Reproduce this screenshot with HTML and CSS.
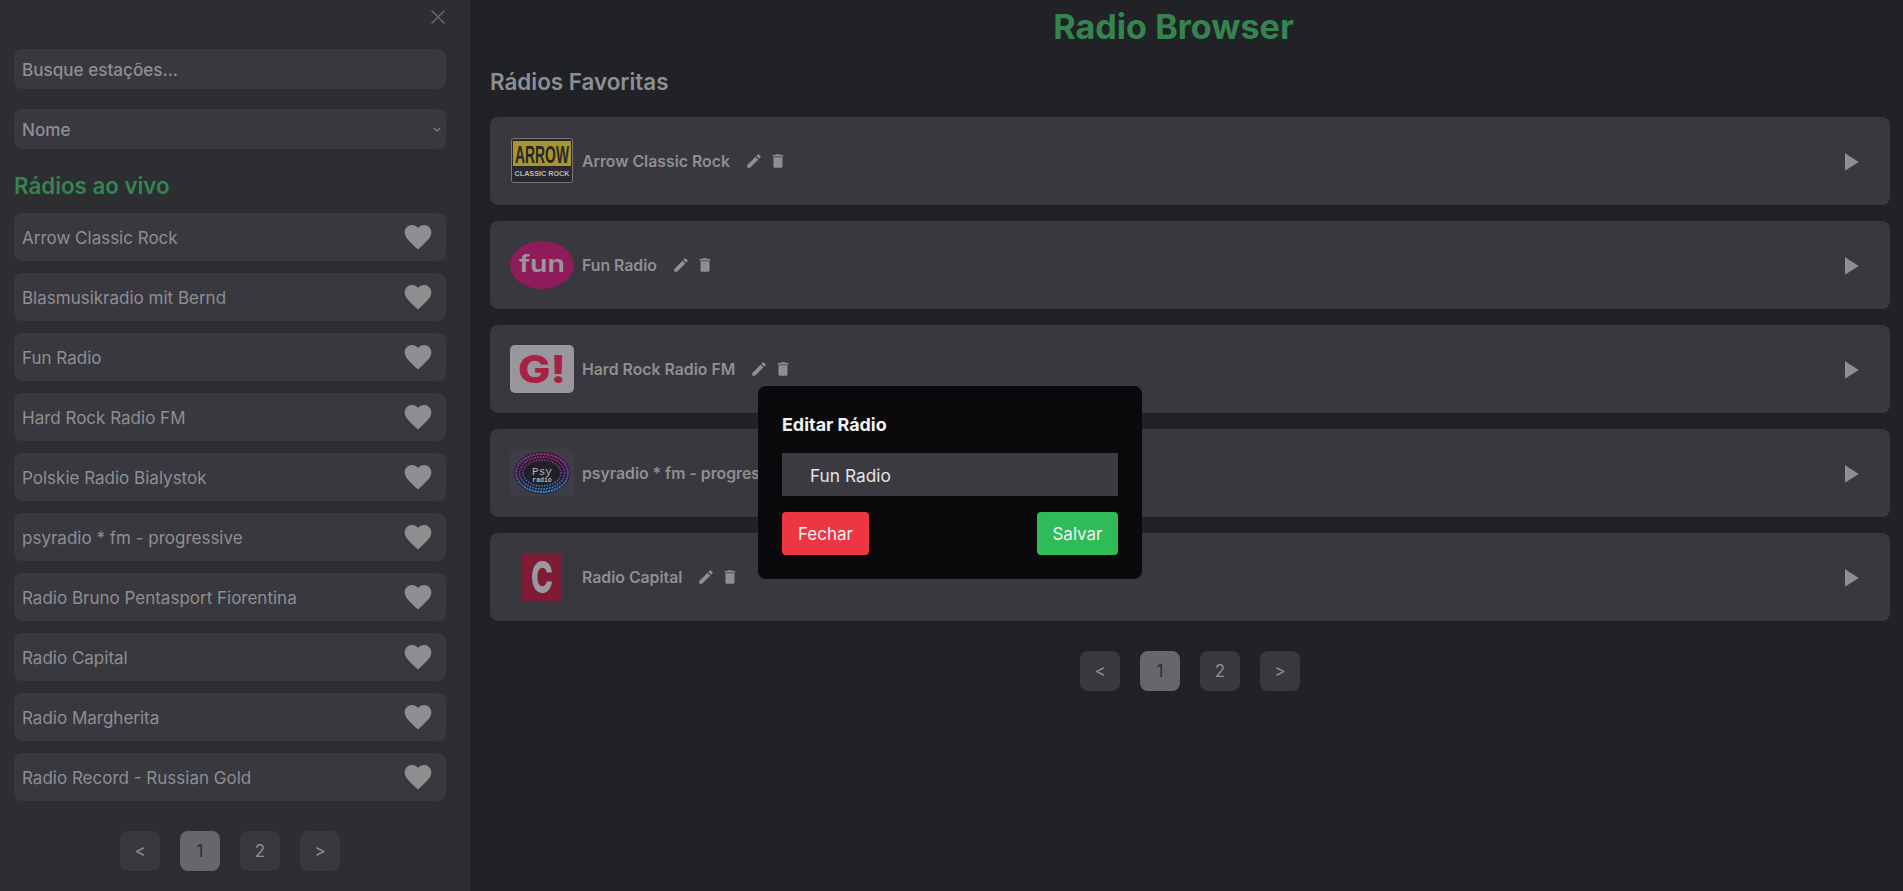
FILE: index.html
```html
<!DOCTYPE html>
<html lang="pt-BR">
<head>
<meta charset="utf-8">
<title>Radio Browser</title>
<link rel="stylesheet" href="styles.css">
</head>
<body>
<svg class="sprites" aria-hidden="true">
  <symbol id="i-heart" viewBox="0 0 24 24"><path d="M12 21.35l-1.45-1.32C5.4 15.36 2 12.28 2 8.5 2 5.42 4.42 3 7.5 3c1.74 0 3.41.81 4.5 2.09C13.09 3.81 14.76 3 16.5 3 19.58 3 22 5.42 22 8.5c0 3.78-3.4 6.86-8.55 11.54L12 21.35z"/></symbol>
  <symbol id="i-edit" viewBox="0 0 24 24"><path d="M3 17.25V21h3.75L17.81 9.94l-3.75-3.75L3 17.25zM20.71 7.04c.39-.39.39-1.02 0-1.41l-2.34-2.34a.9959.9959 0 0 0-1.41 0l-1.83 1.83 3.75 3.75 1.83-1.83z"/></symbol>
  <symbol id="i-del" viewBox="0 0 24 24"><path d="M6 19c0 1.1.9 2 2 2h8c1.1 0 2-.9 2-2V7H6v12zM19 4h-3.5l-1-1h-5l-1 1H5v2h14V4z"/></symbol>
  <symbol id="i-play" viewBox="0 0 24 24"><path d="M8 5v14l11-7z"/></symbol>
</svg>
<div class="app">
  <aside class="sidebar">
    <div class="close-row">
      <svg class="close" viewBox="0 0 16 16"><path d="M1.5 1.5l13 13M14.5 1.5l-13 13"/></svg>
    </div>
    <div class="field">Busque estações...</div>
    <div class="field select">Nome
      <svg class="chev" viewBox="0 0 10 6"><path d="M1 1l4 4 4-4"/></svg>
    </div>
    <h2 class="side-title">Rádios ao vivo</h2>
    <ul class="stations">
      <li class="station"><span>Arrow Classic Rock</span><svg class="heart"><use href="#i-heart"/></svg></li>
      <li class="station"><span>Blasmusikradio mit Bernd</span><svg class="heart"><use href="#i-heart"/></svg></li>
      <li class="station"><span>Fun Radio</span><svg class="heart"><use href="#i-heart"/></svg></li>
      <li class="station"><span>Hard Rock Radio FM</span><svg class="heart"><use href="#i-heart"/></svg></li>
      <li class="station"><span>Polskie Radio Bialystok</span><svg class="heart"><use href="#i-heart"/></svg></li>
      <li class="station"><span>psyradio * fm - progressive</span><svg class="heart"><use href="#i-heart"/></svg></li>
      <li class="station"><span>Radio Bruno Pentasport Fiorentina</span><svg class="heart"><use href="#i-heart"/></svg></li>
      <li class="station"><span>Radio Capital</span><svg class="heart"><use href="#i-heart"/></svg></li>
      <li class="station"><span>Radio Margherita</span><svg class="heart"><use href="#i-heart"/></svg></li>
      <li class="station"><span>Radio Record - Russian Gold</span><svg class="heart"><use href="#i-heart"/></svg></li>
    </ul>
    <nav class="pager">
      <button class="page">&lt;</button><button class="page on">1</button><button class="page">2</button><button class="page">&gt;</button>
    </nav>
  </aside>
  <main class="main">
    <h1 class="title">Radio Browser</h1>
    <h2 class="fav-title">Rádios Favoritas</h2>
    <div class="cards">
      <article class="card">
        <svg class="logo" viewBox="0 0 64 48">
          <rect x="1.5" y="1.5" width="61" height="44" rx="2" fill="#29292b" stroke="#77777a" stroke-width="1"/>
          <rect x="3" y="4" width="58" height="25" fill="#a8952f"/>
          <text class="t-arrow" x="32" y="26" textLength="54" lengthAdjust="spacingAndGlyphs">ARROW</text>
          <text class="t-classic" x="32" y="38.5" textLength="55" lengthAdjust="spacingAndGlyphs">CLASSIC ROCK</text>
        </svg>
        <span class="name">Arrow Classic Rock</span>
        <svg class="ico first"><use href="#i-edit"/></svg><svg class="ico"><use href="#i-del"/></svg>
        <svg class="play"><use href="#i-play"/></svg>
      </article>
      <article class="card">
        <svg class="logo" viewBox="0 0 64 48">
          <ellipse cx="32" cy="24" rx="32" ry="24" fill="#8f1c5a"/>
          <text class="t-fun" x="32" y="31" textLength="46" lengthAdjust="spacingAndGlyphs">fun</text>
        </svg>
        <span class="name">Fun Radio</span>
        <svg class="ico first"><use href="#i-edit"/></svg><svg class="ico"><use href="#i-del"/></svg>
        <svg class="play"><use href="#i-play"/></svg>
      </article>
      <article class="card">
        <svg class="logo" viewBox="0 0 64 48">
          <rect width="64" height="48" rx="5" fill="#98989c"/>
          <text class="t-g" x="32" y="38" textLength="48" lengthAdjust="spacingAndGlyphs">G!</text>
        </svg>
        <span class="name">Hard Rock Radio FM</span>
        <svg class="ico first"><use href="#i-edit"/></svg><svg class="ico"><use href="#i-del"/></svg>
        <svg class="play"><use href="#i-play"/></svg>
      </article>
      <article class="card">
        <svg class="logo" viewBox="0 0 64 48">
          <defs>
            <linearGradient id="psy" x1="0" y1="0" x2="0" y2="1">
              <stop offset="0" stop-color="#a0267e"/>
              <stop offset="0.55" stop-color="#6a3aa0"/>
              <stop offset="1" stop-color="#2f86c8"/>
            </linearGradient>
          </defs>
          <rect width="64" height="48" rx="5" fill="#3e3d47"/>
          <ellipse cx="32" cy="24" rx="28" ry="21" fill="#222128"/>
          <ellipse class="psy-ring" cx="32" cy="24" rx="26" ry="19" stroke-width="2.4"/>
          <ellipse class="psy-ring" cx="32" cy="24" rx="22.5" ry="16" stroke-width="2"/>
          <ellipse class="psy-ring" cx="32" cy="24" rx="19" ry="13" stroke-width="1.8"/>
          <ellipse cx="32" cy="24" rx="14" ry="10" fill="#222128"/>
          <text class="t-psy" x="32" y="26">Psy</text>
          <text class="t-psy2" x="32" y="33">radio</text>
        </svg>
        <span class="name">psyradio * fm - progressive</span>
        <svg class="ico first"><use href="#i-edit"/></svg><svg class="ico"><use href="#i-del"/></svg>
        <svg class="play"><use href="#i-play"/></svg>
      </article>
      <article class="card">
        <svg class="logo" viewBox="0 0 64 48">
          <rect x="12" width="40" height="48" fill="#7e1b35"/>
          <text class="t-c" x="32" y="40" textLength="22" lengthAdjust="spacingAndGlyphs">C</text>
        </svg>
        <span class="name">Radio Capital</span>
        <svg class="ico first"><use href="#i-edit"/></svg><svg class="ico"><use href="#i-del"/></svg>
        <svg class="play"><use href="#i-play"/></svg>
      </article>
    </div>
    <nav class="pager main-pager">
      <button class="page">&lt;</button><button class="page on">1</button><button class="page">2</button><button class="page">&gt;</button>
    </nav>
  </main>
</div>
<div class="modal">
  <h3 class="modal-title">Editar Rádio</h3>
  <div class="modal-input">Fun Radio</div>
  <div class="modal-actions">
    <button class="btn red">Fechar</button>
    <button class="btn green">Salvar</button>
  </div>
</div>
</body>
</html>
```
FILE: styles.css
```css
* { box-sizing: border-box; }
html, body { margin: 0; height: 100%; overflow: hidden; }
body { font-family: Inter, "Liberation Sans", sans-serif; font-size: 17px; color: #8f8f91; background: #212226; }
.sprites { display: none; }
.app { display: flex; height: 100vh; }

.sidebar { width: 470px; flex: none; background: #2d2e32; padding: 0 24px 0 14px; display: flex; flex-direction: column; }
.close-row { height: 49px; display: flex; justify-content: flex-end; align-items: flex-start; padding-top: 9px; }
.close { width: 16px; height: 16px; }
.close path { stroke: #6c6d71; stroke-width: 1.3; fill: none; }
.field { height: 40px; border-radius: 8px; background: #38383e; padding: 1px 5px 0 8px; display: flex; align-items: center; justify-content: space-between; font-size: 17.1px; font-weight: 500; margin-bottom: 20px; }
.chev { width: 8px; height: 5px; }
.chev path { fill: none; stroke: #8f8f91; stroke-width: 1.3; }
.side-title { margin: 0; height: 32px; line-height: 34px; font-size: 22.3px; font-weight: 600; color: #358450; }
.stations { list-style: none; margin: 12px 0 0; padding: 0; display: flex; flex-direction: column; gap: 12px; }
.station { height: 48px; border-radius: 8px; background: #38383e; padding: 0 12px 0 8px; display: flex; align-items: center; justify-content: space-between; }
.station span { padding-top: 2px; }
.heart { width: 32px; height: 32px; fill: #8f8f91; }

.pager { display: flex; justify-content: center; gap: 20px; margin-top: 30px; }
.page { width: 40px; height: 40px; border: 0; border-radius: 8px; background: #38383e; color: #8f8f91; font: 400 17px Inter, "Liberation Sans", sans-serif; padding: 0; }
.page.on { background: #66676c; color: #2d2e32; }

.main { flex: 1; min-width: 0; padding: 0 13px 0 20px; }
.title { margin: 0; padding-right: 33px; text-align: center; font-size: 34.2px; line-height: 53px; font-weight: 700; color: #358450; }
.fav-title { margin: 10px 0 0; font-size: 22.4px; line-height: 37px; font-weight: 600; color: #8f8f91; }
.cards { margin-top: 17px; display: flex; flex-direction: column; gap: 16px; }
.card { height: 88px; border-radius: 8px; background: #38383e; padding: 0 25px 0 20px; display: flex; align-items: center; }
.logo { width: 64px; height: 48px; flex: none; margin-right: 8px; }
.name { font-size: 15.8px; font-weight: 600; }
.ico { width: 18px; height: 18px; fill: #8f8f91; margin-left: 6px; }
.ico.first { margin-left: 15px; }
.play { width: 30px; height: 30px; fill: #8f8f91; margin: 1px 0 0 auto; }
.main-pager { margin-top: 30px; }

.t-arrow { font: 700 24px "Liberation Sans", sans-serif; fill: #27272a; text-anchor: middle; }
.t-classic { font: 700 8px "Liberation Sans", sans-serif; fill: #b8b8b8; text-anchor: middle; }
.t-fun { font: 600 24px Inter, sans-serif; fill: #98989c; text-anchor: middle; }
.t-g { font: 800 38px Inter, sans-serif; fill: #a82145; text-anchor: middle; }
.psy-ring { fill: none; stroke: url(#psy); stroke-linecap: round; stroke-dasharray: 0 2.8; }
.t-psy { font: 400 11px "Liberation Mono", monospace; fill: #b4b4b8; text-anchor: middle; }
.t-psy2 { font: 700 6.5px "Liberation Mono", monospace; fill: #b4b4b8; text-anchor: middle; }
.t-c { font: 800 44px Inter, sans-serif; fill: #9a9a9e; text-anchor: middle; }

.modal { position: absolute; left: 758px; top: 386px; width: 384px; height: 193px; background: #0a0a0c; border-radius: 8px; padding: 24px; }
.modal-title { margin: 0; font-size: 17.9px; line-height: 30px; font-weight: 700; color: #f2f2f2; }
.modal-input { margin-top: 13px; height: 43px; background: #3a3a40; color: #e4e4e6; font-size: 17.3px; line-height: 45px; padding-left: 28px; }
.modal-actions { margin-top: 16px; display: flex; justify-content: space-between; }
.btn { height: 43px; border: 0; border-radius: 4px; padding: 1px 15.5px 0; color: #f4f4f4; font: 400 17px Inter, "Liberation Sans", sans-serif; }
.red { background: #ed3642; padding: 1px 16px 0; }
.green { background: #2fbb57; }
```
